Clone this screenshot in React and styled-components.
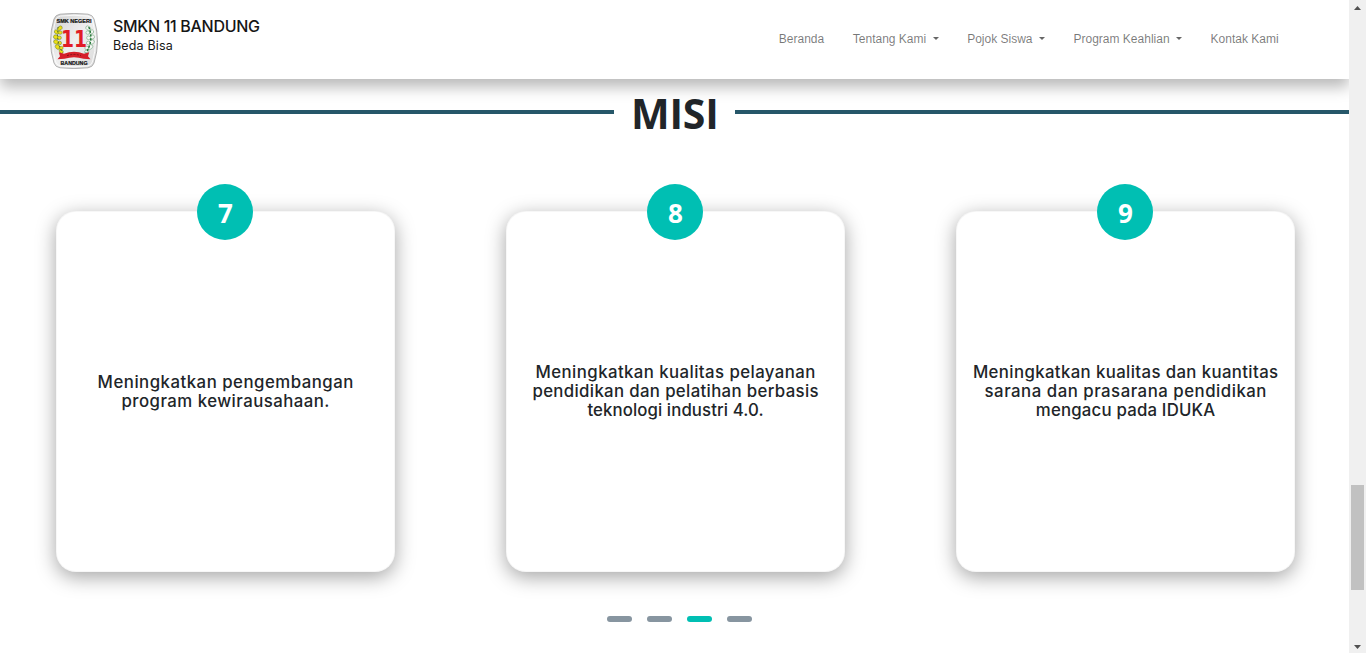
import React from "react";
import styled, { createGlobalStyle } from "styled-components";

const GlobalStyle = createGlobalStyle`
  *, *::before, *::after { box-sizing: border-box; }
  html, body { margin: 0; height: 100%; overflow: hidden; background: #fff; }
  body { font-family: Inter, "Liberation Sans", sans-serif; color: #212529; }
`;

const Window = styled.div`
  display: flex;
  height: 653px;
  width: 1366px;
`;

const Page = styled.div`
  flex: 1;
  min-width: 0;
  overflow: hidden;
  display: flex;
  flex-direction: column;
`;

const Header = styled.header`
  position: relative;
  z-index: 2;
  flex: none;
  display: flex;
  justify-content: space-between;
  height: 79px;
  padding: 0 70.4px 0 50px;
  background: #fff;
  box-shadow: 0 8px 14px rgba(0, 0, 0, 0.28);
`;

const Brand = styled.div`
  display: flex;
  gap: 15px;
  padding-top: 13px;
`;

const BrandText = styled.div`
  padding-top: 3px;
  color: #161616;
`;

const SchoolName = styled.div`
  font-size: 16px;
  font-weight: 500;
  line-height: 20px;
  letter-spacing: -0.31px;
  white-space: nowrap;
`;

const Tagline = styled.div`
  font-size: 12.5px;
  line-height: 19px;
  letter-spacing: 0.16px;
`;

const Nav = styled.nav`
  display: flex;
  gap: 28.6px;
  padding-top: 30px;
`;

const NavItem = styled.a`
  display: flex;
  height: 18px;
  font: 12px/18px "Liberation Sans", Arial, sans-serif;
  color: rgba(0, 0, 0, 0.53);
  white-space: nowrap;
`;

const Caret = styled.span`
  align-self: flex-start;
  margin: 7px 0 0 6.4px;
  border: 3.6px solid transparent;
  border-top-color: rgba(0, 0, 0, 0.6);
  border-bottom: 0;
`;

const TitleRow = styled.div`
  flex: none;
  display: flex;
  align-items: center;
  gap: 17px;
  height: 66px;
`;

const Rule = styled.span`
  flex: 1;
  height: 4px;
  background: #265769;
`;

const Title = styled.h1`
  margin: 2px 0 0;
  width: 87px;
  text-align: center;
  font: 700 41px/50px "Open Sans", "Noto Sans", sans-serif;
  letter-spacing: -0.2px;
`;

const Cards = styled.section`
  display: grid;
  grid-template-columns: repeat(3, 450px);
  padding-top: 66px;
`;

const Card = styled.article`
  position: relative;
  display: flex;
  align-items: center;
  justify-content: center;
  width: 339px;
  height: 361px;
  margin-left: 56px;
  border: 1px solid rgba(0, 0, 0, 0.03);
  border-radius: 20px;
  background: #fff;
  box-shadow: 0 5px 20px rgba(0, 0, 0, 0.36);
`;

const Badge = styled.div`
  position: absolute;
  top: -28px;
  left: 140.4px;
  width: 56px;
  height: 56px;
  border-radius: 50%;
  background: #00bfb3;
  color: #fff;
  text-align: center;
  font: 700 26px/59px "Open Sans", "Noto Sans", sans-serif;
`;

const Mission = styled.div`
  display: flex;
  flex-direction: column;
  align-items: center;
`;

const Line = styled.span`
  font-size: 16.8px;
  font-weight: 500;
  line-height: 19px;
  white-space: nowrap;
  letter-spacing: ${(p) => p.$spacing}px;
  margin-right: -${(p) => p.$spacing}px;
`;

const Dots = styled.div`
  display: flex;
  gap: 15px;
  padding: 44px 0 0 607px;
`;

const Dot = styled.span`
  width: 25px;
  height: 6px;
  border-radius: 3px;
  background: ${(p) => (p.$active ? "#00bfb3" : "#8795a0")};
`;

const Scrollbar = styled.aside`
  flex: none;
  display: flex;
  flex-direction: column;
  align-items: center;
  width: 17px;
  background: #f0f0f0;
`;

const Arrow = styled.svg`
  display: block;
  width: 17px;
  height: 17px;
`;

const Thumb = styled.div`
  width: 13px;
  height: 105px;
  margin: 468px 0 46px;
  background: #c1c1c1;
`;

const Leaves = ({ color, stroke, flip }) => (
  <g transform={flip ? "translate(48 0) scale(-1 1)" : undefined} fill={color} stroke={stroke} strokeWidth="0.4">
    <ellipse cx="9.8" cy="15.2" rx="2.7" ry="1.9" transform="rotate(-35 9.8 15.2)" />
    <ellipse cx="6.8" cy="19" rx="2.6" ry="1.9" transform="rotate(25 6.8 19)" />
    <ellipse cx="10.2" cy="19.6" rx="1.9" ry="1.7" />
    <ellipse cx="5.9" cy="24" rx="2.5" ry="2" transform="rotate(20 5.9 24)" />
    <ellipse cx="9.4" cy="24.8" rx="2" ry="1.8" />
    <ellipse cx="6.1" cy="29" rx="2.6" ry="2" transform="rotate(30 6.1 29)" />
    <ellipse cx="9.6" cy="30" rx="2" ry="1.8" />
    <ellipse cx="7.6" cy="34" rx="2.6" ry="2" transform="rotate(45 7.6 34)" />
    <ellipse cx="11.2" cy="35" rx="2" ry="1.7" />
    <ellipse cx="11.2" cy="38.4" rx="2.4" ry="1.7" transform="rotate(45 11.2 38.4)" />
  </g>
);

const Logo = () => (
  <svg width="48" height="56" viewBox="0 0 48 56">
    <defs>
      <linearGradient id="shield" x1="0" y1="0" x2="1" y2="1">
        <stop offset="0" stopColor="#cfcfcf" />
        <stop offset="0.5" stopColor="#efefef" />
        <stop offset="1" stopColor="#d9d9d9" />
      </linearGradient>
    </defs>
    <path
      d="M10 1.2Q24-.4 38 1.2Q42.8 2 44 6Q51 28 44 50Q42.8 54 38 54.8Q24 56.4 10 54.8Q5.2 54 4 50Q-3 28 4 6Q5.2 2 10 1.2Z"
      fill="url(#shield)"
      stroke="#a9a9a9"
      strokeWidth="0.9"
    />
    <path
      d="M10.6 3Q24 1.5 37.4 3Q41.3 3.6 42.4 7Q48.6 28 42.4 49Q41.3 52.4 37.4 53Q24 54.5 10.6 53Q6.7 52.4 5.6 49Q-.6 28 5.6 7Q6.7 3.6 10.6 3Z"
      fill="none"
      stroke="#fff"
      strokeWidth="0.8"
    />
    <Leaves color="#ecdf17" stroke="#4c6626" />
    <Leaves color="#f6f8f4" stroke="#3f8a50" flip />
    <path d="M8.2 14Q5.6 27 12.6 40" fill="none" stroke="#26502a" strokeWidth="0.8" strokeDasharray="1.6 2.2" />
    <path d="M38.8 14Q44 27 36 40" fill="none" stroke="#1f7434" strokeWidth="1.4" strokeDasharray="2.2 1.6" />
    <g fontFamily="Liberation Sans, Arial, sans-serif" fontWeight="700" textAnchor="middle">
      <text x="24" y="10" fontSize="6.2" fill="#111" stroke="#111" strokeWidth="0.2" textLength="35" lengthAdjust="spacingAndGlyphs">SMK NEGERI</text>
      <text x="24" y="34.2" fontSize="23" fill="#e11b26" textLength="26" lengthAdjust="spacingAndGlyphs" fontFamily="DejaVu Sans, sans-serif">11</text>
      <text x="24" y="52.2" fontSize="5.8" fill="#111" stroke="#111" strokeWidth="0.2" textLength="27" lengthAdjust="spacingAndGlyphs">BANDUNG</text>
    </g>
    <path d="M7.5 46.2L10 43.2L8.8 39.2L14 40.8Q24 36.6 34 40.8L39.2 39.2L38 43.2L40.5 46.2L33.5 45.8Q24 42.6 14.5 45.8Z" fill="#d51f2a" />
    <path d="M17 42.6Q24 40.3 31 42.6" fill="none" stroke="#7f1219" strokeWidth="1" strokeDasharray="2 1.3" />
  </svg>
);

const links = [
  { label: "Beranda" },
  { label: "Tentang Kami", menu: true },
  { label: "Pojok Siswa", menu: true },
  { label: "Program Keahlian", menu: true },
  { label: "Kontak Kami" },
];

const missions = [
  { number: 7, lines: [["Meningkatkan pengembangan", 0.5], ["program kewirausahaan.", 0.47]] },
  {
    number: 8,
    lines: [
      ["Meningkatkan kualitas pelayanan", 0.43],
      ["pendidikan dan pelatihan berbasis", 0.35],
      ["teknologi industri 4.0.", 0.1],
    ],
  },
  {
    number: 9,
    lines: [
      ["Meningkatkan kualitas dan kuantitas", 0.38],
      ["sarana dan prasarana pendidikan", 0.51],
      ["mengacu pada IDUKA", 0.2],
    ],
  },
];

export default function App() {
  return (
    <Window>
      <GlobalStyle />
      <Page>
        <Header>
          <Brand>
            <Logo />
            <BrandText>
              <SchoolName>SMKN 11 BANDUNG</SchoolName>
              <Tagline>Beda Bisa</Tagline>
            </BrandText>
          </Brand>
          <Nav>
            {links.map((link) => (
              <NavItem key={link.label}>
                {link.label}
                {link.menu && <Caret />}
              </NavItem>
            ))}
          </Nav>
        </Header>
        <TitleRow>
          <Rule />
          <Title>MISI</Title>
          <Rule />
        </TitleRow>
        <Cards>
          {missions.map((mission) => (
            <Card key={mission.number}>
              <Badge>{mission.number}</Badge>
              <Mission>
                {mission.lines.map(([text, spacing]) => (
                  <Line key={text} $spacing={spacing}>{text}</Line>
                ))}
              </Mission>
            </Card>
          ))}
        </Cards>
        <Dots>
          <Dot />
          <Dot />
          <Dot $active />
          <Dot />
        </Dots>
      </Page>
      <Scrollbar>
        <Arrow viewBox="0 0 17 17"><path d="M5 10L8.5 6L12 10Z" fill="#505050" /></Arrow>
        <Thumb />
        <Arrow viewBox="0 0 17 17"><path d="M5 9L8.5 13L12 9Z" fill="#505050" /></Arrow>
      </Scrollbar>
    </Window>
  );
}
